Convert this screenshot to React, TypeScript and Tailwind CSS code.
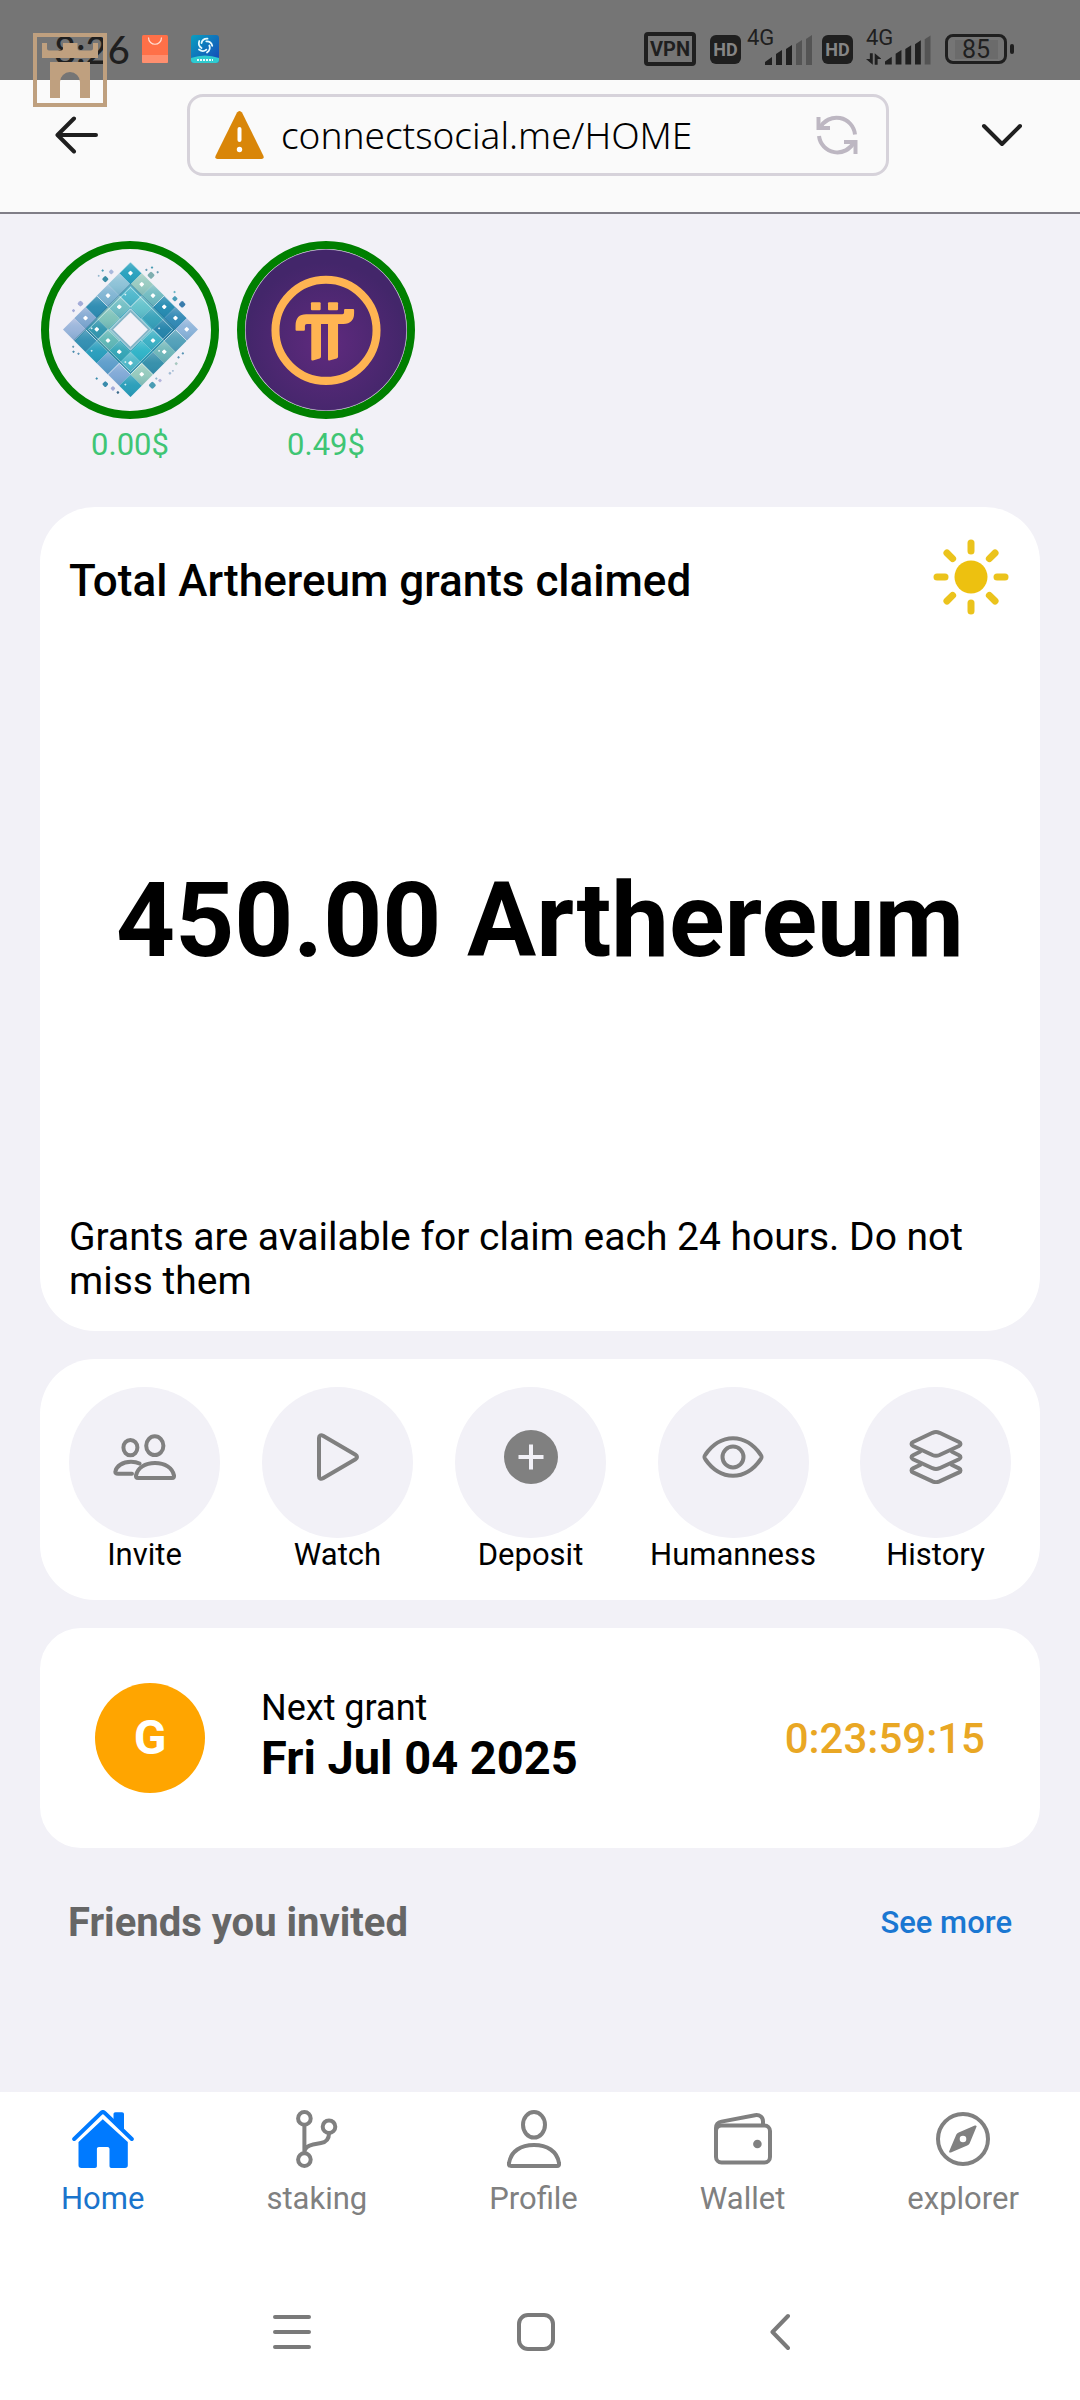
import type { ReactNode } from "react";

type IconProps = { w: number; h: number; sw?: number; children: ReactNode };

function LineIcon({ w, h, sw = 4, children }: IconProps) {
  return (
    <svg
      width={w}
      height={h}
      viewBox={`0 0 ${w} ${h}`}
      fill="none"
      stroke="currentColor"
      strokeWidth={sw}
      strokeLinecap="round"
      strokeLinejoin="round"
      aria-hidden="true"
    >
      {children}
    </svg>
  );
}

const InviteIcon = () => (
  <LineIcon w={64} h={48}>
    <ellipse cx="17.4" cy="14.6" rx="7" ry="7.7" />
    <ellipse cx="41.8" cy="12.7" rx="8.6" ry="9.4" />
    <path d="M25 45h34c1.8 0 2.2-1 2-2.5C59.5 35 52 30 42 30S24.5 35 23 42.5C22.8 44 23.2 45 25 45z" />
    <path d="M26.5 30.6C24 29.3 21 28.8 18 28.8 9 28.8 3.5 33.5 2.5 38 2 40 3 40.8 5 40.8h14" />
  </LineIcon>
);

const WatchIcon = () => (
  <LineIcon w={42} h={48}>
    <path d="M2 5v38c0 2.5 1.8 3.5 4 2.3l32.5-19c2-1.2 2-3.4 0-4.6L6 2.7C3.8 1.5 2 2.5 2 5z" />
  </LineIcon>
);

const DepositIcon = () => (
  <LineIcon w={54} h={54}>
    <circle cx="27" cy="27" r="27" fill="currentColor" stroke="none" />
    <path d="M14.5 27h25M27 14.5v25" stroke="#f2f1f7" strokeLinecap="butt" />
  </LineIcon>
);

const EyeIcon = () => (
  <LineIcon w={62} h={42}>
    <path d="M3.5 18.5C10 9 20 2.2 31 2.2S52 9 58.5 18.5c1.6 2 1.6 3 0 5C52 33 42 39.8 31 39.8S10 33 3.5 23.5c-1.6-2-1.6-3 0-5z" />
    <circle cx="31" cy="21" r="10.5" />
  </LineIcon>
);

const LayersIcon = () => (
  <LineIcon w={54} h={54}>
    <path d="M23.5 2.8L4 12c-2 1-2 3 0 4l19.5 9c2.3 1 4.7 1 7 0L50 16c2-1 2-3 0-4L30.5 2.8c-2.3-1-4.7-1-7 0z" />
    <path d="M11 21.8l-7 3.4c-2 1-2 3 0 4l19.5 9c2.3 1 4.7 1 7 0l19.5-9c2-1 2-3 0-4l-7-3.4" />
    <path d="M11 35l-7 3.4c-2 1-2 3 0 4l19.5 9c2.3 1 4.7 1 7 0l19.5-9c2-1 2-3 0-4L43 35" />
  </LineIcon>
);

const HomeIcon = () => (
  <LineIcon w={62} h={58}>
    <path
      d="M30.8 9.3L55.8 32v23.2c0 1.8-1 2.8-2.8 2.8H39.5c-1.3 0-2-.7-2-2V39c0-1.2-.8-2-2-2h-8.6c-1.2 0-2 .8-2 2v17c0 1.3-.7 2-2 2H9.3c-1.8 0-2.800-1-2.800-2.800V32zM43.500 2.300h6.500c1.300 0 2 .7 2 2V20L41.500 10.200V4.300c0-1.300.7-2 2-2z"
      fill="currentColor"
      stroke="none"
    />
    <path d="M2.200 29L28.900 3.100c1.300-1.300 2.700-1.300 4 0L59.800 29" />
  </LineIcon>
);

const BranchIcon = () => (
  <LineIcon w={42} h={58}>
    <circle cx="8.4" cy="8.4" r="6.3" />
    <circle cx="8.4" cy="49.6" r="6.3" />
    <circle cx="33" cy="16.7" r="6.3" />
    <path d="M8.4 15v28M33 23.500c0 5.500-2.500 8.500-8 9.500l-8 1.500c-5 1-8.600 3-8.600 8" />
  </LineIcon>
);

const PersonIcon = () => (
  <LineIcon w={54} h={58}>
    <ellipse cx="27" cy="14.8" rx="11" ry="12.8" />
    <path d="M4 56h46c1.6 0 2.4-1 2-3C50 41 40 35 27 35S4 41 2 53c-.4 2 .4 3 2 3z" />
  </LineIcon>
);

const WalletIcon = () => (
  <LineIcon w={58} h={52}>
    <rect x="2" y="12.5" width="54" height="37" rx="5.5" />
    <path d="M2 18v-3c0-4 2-5.8 5.5-6.4L41 2.200c5-.7 8 2 8 6.300v3.500" />
    <circle cx="43.4" cy="31" r="4.3" fill="currentColor" stroke="none" />
  </LineIcon>
);

const CompassIcon = () => (
  <LineIcon w={54} h={54}>
    <circle cx="27" cy="27" r="25" />
    <path
      fillRule="evenodd"
      stroke="none"
      fill="currentColor"
      d="M38.800 13.600c1.400-.6 2.200.2 1.600 1.500l-6.600 15.800c-.4 1-1.300 2-2.600 2.600L14.900 40.400c-1.400.6-2.200-.2-1.600-1.500l6.700-15.600c.6-1.400 1.500-2.200 2.700-2.800zM27 23.700a3.300 3.300 0 100 6.600 3.300 3.300 0 000-6.600z"
    />
  </LineIcon>
);

const CastleLogo = () => (
  <svg width="74" height="74" viewBox="33 33 74 74" aria-hidden="true">
    <rect x="35" y="35" width="70" height="70" fill="none" stroke="#bfa07f" strokeWidth="4" />
    <path
      fill="#bfa07f"
      d="M42 43h5v5.500q0 2 2 2h12q2 0 2-2V43h14.500v5.500q0 2 2 2H91q2 0 2-2V43h5v15H42zM50 62h40v36H80V82a10 10 0 00-20 0v16H50z"
    />
  </svg>
);

const bars = [
  "M0 30v-3l7-5v8z",
  "M11 30V19l6-4v15z",
  "M21 30V14l6-4v20z",
  "M31 30V9l6-4v25z",
  "M41 30V4l6-4v30z",
];

function Signal({ lit, data }: { lit: number; data?: boolean }) {
  return (
    <span className="relative flex h-9 w-[65px] items-end justify-end">
      <span className="absolute top-0 left-0 text-[22px] leading-[18px]">4G</span>
      {data && (
        <svg width="16" height="12" viewBox="0 0 16 12" className="mr-1" aria-hidden="true">
          <path d="M7 0v12L0 6h4V0zM9 12V0l7 6h-4v6z" fill="currentColor" />
        </svg>
      )}
      <svg width="47" height="30" viewBox="0 0 47 30" aria-hidden="true">
        {bars.map((d, i) => (
          <path key={d} d={d} fill={i < lit ? "#1f1f1f" : "#545454"} />
        ))}
      </svg>
    </span>
  );
}

const Hd = () => (
  <span className="flex h-[29px] w-[31px] items-center justify-center rounded-md bg-[#1f1f1f] text-[18px] font-bold text-[#858585]">
    HD
  </span>
);

function StatusBar() {
  return (
    <header className="relative flex h-20 items-center justify-between bg-[#757575] pr-[66px] pl-[54px] text-[#1f1f1f]">
      <div className="flex items-center pt-[18px]">
        <span className="w-[88px] font-[Lato] text-[38px] leading-[30px] font-medium">8:26</span>
        <svg width="26" height="28" viewBox="0 0 26 28" aria-hidden="true">
          <rect width="26" height="28" rx="1.5" fill="#ff7048" />
          <path d="M0 20h26v6.500q0 1.500-1.500 1.500h-23Q0 28 0 26.500z" fill="#ff8f6f" />
          <path d="M6.500 2.500c0 9 13 9 13 0" fill="none" stroke="#ffe0d5" strokeWidth="1.2" />
        </svg>
        <svg width="28" height="28" viewBox="0 0 28 28" className="ml-[23px]" aria-hidden="true">
          <defs>
            <linearGradient id="appBlue" x1="0" y1="0" x2="1" y2="1">
              <stop offset="0" stopColor="#0a9fc0" />
              <stop offset="1" stopColor="#1546b8" />
            </linearGradient>
          </defs>
          <rect width="28" height="28" rx="3" fill="url(#appBlue)" />
          <path d="M0 23q14-5 28 0v2q0 3-3 3H3q-3 0-3-3z" fill="#2fcbd0" />
          <g fill="none" stroke="#e8fbff" strokeWidth="1.8" strokeLinecap="round">
            {[0, 72, 144, 216, 288].map((a) => (
              <path key={a} d="M10.500 8q1-4.500 6-4.300" transform={`rotate(${a} 14 10.500)`} />
            ))}
          </g>
          <path d="M6 25h16" stroke="#e8fbff" strokeWidth="2" strokeDasharray="2 1" />
        </svg>
      </div>
      <div className="flex items-center pt-[18px]">
        <span className="flex h-[34px] w-[52px] items-center justify-center rounded-sm border-4 border-[#1f1f1f] text-[20px] font-bold">
          VPN
        </span>
        <span className="ml-[14px]">
          <Hd />
        </span>
        <span className="ml-1.5 pb-1">
          <Signal lit={3} />
        </span>
        <span className="ml-[10px]">
          <Hd />
        </span>
        <span className="ml-[13px] pb-1">
          <Signal lit={4} data />
        </span>
        <span className="ml-[14px] flex items-center gap-[3px]">
          <span className="flex h-[30px] w-[62px] items-center justify-center rounded-lg border-[3px] border-[#1f1f1f] text-[25px] leading-none">
            <span className="flex h-[19px] w-[43px] items-center justify-center bg-[#6b6b6b]">85</span>
          </span>
          <span className="h-[10px] w-1 rounded-full bg-[#1f1f1f]" />
        </span>
      </div>
      <div className="absolute top-[33px] left-[33px] z-10">
        <CastleLogo />
      </div>
    </header>
  );
}

function AddressBar() {
  return (
    <div className="flex items-start justify-between border-b-2 border-[#807e87] bg-[#fafafa] pt-[14px] pr-[57px] pb-9 pl-[55px] text-[#1f1f1f]">
      <button aria-label="Back" className="flex h-[82px] items-center">
        <LineIcon w={43} h={38}>
          <path d="M41 19H3M19 2.500L2.500 19 19 35.500" />
        </LineIcon>
      </button>
      <div className="mr-[92px] ml-[89px] flex h-[82px] min-w-0 flex-1 items-center rounded-2xl border-[3px] border-[#d6d2da] pr-7 pl-[25px]">
        <svg width="49" height="48" viewBox="0 0 49 48" className="shrink-0" aria-hidden="true">
          <path d="M22 1.500q2.500-3 5 0L48.500 45q.8 3-2 3h-44q-2.800 0-2-3z" fill="#d98609" />
          <path d="M24.500 18v11" stroke="#fff" strokeWidth="4" strokeLinecap="round" />
          <circle cx="24.5" cy="38.5" r="2.7" fill="#fff" />
        </svg>
        <input
          aria-label="Address"
          defaultValue="connectsocial.me/HOME"
          className="ml-[17px] min-w-0 flex-1 bg-transparent font-['Noto_Sans'] text-[37px] font-light text-black outline-none"
        />
        <button aria-label="Reload" className="text-[#bdb7c2]">
          <LineIcon w={42} h={42}>
            <g strokeLinecap="butt" strokeLinejoin="miter">
              <path d="M4 14a18.500 18.500 0 0135 6.500M38 28a18.500 18.500 0 01-35-6" />
              <path d="M2.500 3v11H14M39.500 40V28H28" />
            </g>
          </LineIcon>
        </button>
      </div>
      <button aria-label="Menu" className="flex h-[82px] items-center">
        <LineIcon w={42} h={24}>
          <path d="M3 3l18 18L39 3" />
        </LineIcon>
      </button>
    </div>
  );
}

const tileColors = [
  ["#2fa0bd", "#a9cdc0", "#7fbcc0", "#2b88b0", "#3a86b4", "#9db4dc"],
  ["#9cc3d8", "#58b8cc", "#6fc4cc", "#3fa0b8", "#2a7fa8", "#5d9fb8"],
  ["#8fb5d4", "#7fc0c4", "#2f9db8", "#2aa4bc", "#43b0c4", "#7db8b8"],
  ["#3488b0", "#8cc4b8", "#4aa9b4", "#2f9cb8", "#36b4c8", "#3c8ca8"],
  ["#93a9d4", "#3a94ac", "#6cb8b4", "#3ba4b4", "#58b8c8", "#a4ccbc"],
  ["#a9b4dc", "#3a8cb0", "#2f9cbc", "#6a9ccc", "#8fa8d8", "#2f9cb8"],
];

const specks: [number, number, number, string][] = [
  [257, 178, 15, "#3a8ca4"], [275, 156, 12, "#a9b8dc"], [249, 152, 6, "#4a9cb4"], [237, 168, 5, "#8fb4cc"],
  [395, 166, 17, "#7faeb0"], [398, 143, 6, "#4a9cb4"], [415, 157, 6, "#6a9cb4"], [381, 150, 6, "#6a9cb4"],
  [467, 237, 13, "#4a9cb8"], [489, 254, 16, "#3a7cac"], [466, 217, 6, "#6ab4c4"],
  [182, 252, 14, "#a4acd8"], [161, 273, 8, "#a4acd8"],
  [160, 382, 6, "#6a9cb4"], [176, 403, 6, "#5a94b4"], [161, 397, 6, "#4a8cac"],
  [257, 495, 14, "#3a8cac"], [280, 508, 11, "#a4acd8"], [295, 520, 7, "#3c6c8c"], [231, 478, 6, "#3a8cac"],
  [399, 498, 17, "#4a9cb4"], [422, 484, 9, "#b4b4dc"], [411, 478, 6, "#8fb4cc"], [452, 462, 7, "#a4bcd4"],
  [471, 433, 8, "#a9c8c0"], [478, 414, 6, "#5a94b4"], [491, 402, 6, "#5a94b4"], [461, 455, 5, "#a4bcd4"],
];

function ArthereumLogo() {
  const u = 48;
  return (
    <svg className="size-full" viewBox="87 87 489 489" aria-hidden="true">
      <defs>
        <linearGradient id="sheen" x1="0" y1="0" x2="1" y2="1">
          <stop offset="0" stopColor="#fff" stopOpacity=".25" />
          <stop offset=".5" stopColor="#1fc0d0" stopOpacity=".1" />
          <stop offset="1" stopColor="#0d6f96" stopOpacity=".25" />
        </linearGradient>
      </defs>
      <g transform="translate(333 330) rotate(45)">
        {tileColors.flatMap((row, r) =>
          row.map((c, k) => {
            const x = (k - 3) * u;
            const y = (r - 3) * u;
            const line = (r + k) % 3 === 0;
            return (
              <g key={`${r}-${k}`}>
                <rect x={x} y={y} width={u} height={u} fill={c} />
                <rect x={x} y={y} width={u} height={u} fill="url(#sheen)" />
                {line && <path d={`M${x} ${y + u}V${y}h${u}`} fill="none" stroke="#fff" strokeOpacity=".8" strokeWidth="2" />}
                {(r + 2 * k) % 2 === 0 && <rect x={x + 18} y={y + 18} width="11" height="11" rx="2" fill="#fff" />}
                {(r * k) % 3 === 1 && <rect x={x + 8} y={y + 30} width="5" height="5" fill="#fff" fillOpacity=".8" />}
              </g>
            );
          }),
        )}
        <path d="M-96 144V-96H96" fill="none" stroke="#1b6c90" strokeOpacity=".45" strokeWidth="5" />
        <path d="M-92 92H92V-92" fill="none" stroke="#1b6c90" strokeOpacity=".5" strokeWidth="5" />
        <rect x="-90" y="-90" width="180" height="180" fill="none" stroke="#fff" strokeOpacity=".7" strokeWidth="2" />
        <rect x="-44" y="-44" width="88" height="88" fill="#83b4c6" stroke="#fff" strokeWidth="2" />
        <rect x="-37" y="-37" width="74" height="74" fill="#f2f1f7" />
      </g>
      {specks.map(([x, y, s, c]) => (
        <rect key={`${x}-${y}`} x={x - s / 2} y={y - s / 2} width={s} height={s} rx={s / 4} fill={c} transform={`rotate(45 ${x} ${y})`} />
      ))}
    </svg>
  );
}

function PiLogo() {
  return (
    <svg className="size-full" viewBox="676 87 484 484" aria-hidden="true">
      <defs>
        <radialGradient id="piBg" cx=".5" cy=".58" r=".5">
          <stop offset="0" stopColor="#5f2a7e" />
          <stop offset="1" stopColor="#43266a" />
        </radialGradient>
      </defs>
      <circle cx="918" cy="329" r="241" fill="url(#piBg)" stroke="#b9a9c8" strokeWidth="2" />
      <circle cx="918" cy="330" r="151" fill="none" stroke="#ffb452" strokeWidth="24" />
      <g fill="#ffb452">
        <rect x="873" y="246" width="29" height="24" rx="3" />
        <rect x="924" y="246" width="30" height="24" rx="3" />
        <path d="M830 331q-3 0-3-3v-12q0-34 32-34h108q5 0 5-5v-8q0-3 3-3h24q3 0 3 3v9q0 32-32 33h-16v98q0 4-4 5l-22 6q-4 1-4-3V311h-21v98q0 4-4 5l-20 6q-5 1-5-3V311h-13q-6 0-6 6v11q0 3-3 3z" />
      </g>
    </svg>
  );
}

function Token({ price, name, children }: { price: string; name: string; children: ReactNode }) {
  return (
    <button aria-label={name} className="flex flex-col items-center gap-2">
      <span className="size-[178px] overflow-hidden rounded-full border-8 border-[#007f00]">{children}</span>
      <span className="text-[31px] leading-[36px] text-[#3fc574]">{price}</span>
    </button>
  );
}

const SunIcon = () => (
  <svg width="76" height="76" viewBox="-38 -38 76 76" aria-hidden="true">
    <circle r="16.5" fill="#edc110" />
    {[0, 45, 90, 135, 180, 225, 270, 315].map((a) => (
      <path key={a} d="M0-26v-8" stroke="#ebc31c" strokeWidth="7" strokeLinecap="round" transform={`rotate(${a})`} />
    ))}
  </svg>
);

const actions = [
  { label: "Invite", icon: <InviteIcon /> },
  { label: "Watch", icon: <WatchIcon /> },
  { label: "Deposit", icon: <DepositIcon /> },
  { label: "Humanness", icon: <EyeIcon />, wide: true },
  { label: "History", icon: <LayersIcon /> },
];

const tabs = [
  { label: "Home", icon: <HomeIcon />, active: true },
  { label: "staking", icon: <BranchIcon /> },
  { label: "Profile", icon: <PersonIcon /> },
  { label: "Wallet", icon: <WalletIcon /> },
  { label: "explorer", icon: <CompassIcon /> },
];

export default function App() {
  return (
    <div className="flex min-h-screen flex-col bg-[#f2f1f7] font-[Roboto,sans-serif] text-black">
      <StatusBar />
      <AddressBar />

      <main className="flex flex-1 flex-col gap-7 px-10 pt-[27px]">
        <div className="mb-4 flex gap-[18px] pl-px">
          <Token price="0.00$" name="Arthereum 0.00$">
            <ArthereumLogo />
          </Token>
          <Token price="0.49$" name="Pi 0.49$">
            <PiLogo />
          </Token>
        </div>

        <section className="flex h-[824px] flex-col justify-between rounded-[55px] bg-white px-[29px] pt-8 pb-7">
          <div className="flex items-center justify-between">
            <h1 className="pt-2 text-[44px] leading-[50px] font-medium">Total Arthereum grants claimed</h1>
            <button aria-label="Toggle theme" className="pr-0.5">
              <SunIcon />
            </button>
          </div>
          <p className="pt-3 text-center text-[103px] leading-[120px] font-bold">450.00 Arthereum</p>
          <p className="text-[39px] leading-[44px]">Grants are available for claim each 24 hours. Do not miss them</p>
        </section>

        <section className="flex justify-between rounded-[55px] bg-white px-[29px] py-7">
          {actions.map((a) => (
            <button key={a.label} className={a.wide ? "flex w-[170px] flex-col items-center" : "flex flex-col items-center"}>
              <span className="flex size-[151px] items-center justify-center rounded-full bg-[#f2f1f7] pb-[11px] text-[#808080]">
                {a.icon}
              </span>
              <span className="text-[31px] leading-[34px]">{a.label}</span>
            </button>
          ))}
        </section>

        <section className="flex items-center rounded-[41px] bg-white p-[55px]">
          <span className="flex size-[110px] items-center justify-center rounded-full bg-[#ffa500] text-[48px] font-bold text-white">
            G
          </span>
          <div className="ml-14">
            <p className="text-[36px] leading-[40px]">Next grant</p>
            <p className="text-[47px] leading-[60px] font-bold">Fri Jul 04 2025</p>
          </div>
          <time className="ml-auto text-[42px] font-medium text-[#e9a724]">0:23:59:15</time>
        </section>

        <section className="flex items-center justify-between px-7 pt-6">
          <h2 className="text-[40px] leading-[46px] font-bold text-[#666666]">Friends you invited</h2>
          <a href="#friends" className="text-[31px] leading-[36px] font-medium text-[#1a77d2]">
            See more
          </a>
        </section>
      </main>

      <nav aria-label="Main" className="flex justify-around bg-white pt-2 pb-24">
        {tabs.map((t) => (
          <a
            key={t.label}
            href={`#${t.label}`}
            className={t.active ? "flex flex-col items-center text-[#007aff]" : "flex flex-col items-center text-[#808080]"}
          >
            <span className="flex h-[78px] items-center">{t.icon}</span>
            <span className={t.active ? "pt-1 text-[31px] leading-[34px] text-[#1a74cc]" : "pt-1 text-[31px] leading-[34px]"}>{t.label}</span>
          </a>
        ))}
      </nav>

      <div className="flex justify-center gap-[206px] bg-white pr-2 pb-12 text-[#7a7a7a]">
        <button aria-label="Recent apps" className="flex h-10 items-center">
          <LineIcon w={38} h={38}>
            <path d="M2 4h34M2 19h34M2 34h34" />
          </LineIcon>
        </button>
        <button aria-label="Home screen" className="flex h-10 items-center">
          <LineIcon w={38} h={38}>
            <rect x="2" y="2" width="34" height="34" rx="9" />
          </LineIcon>
        </button>
        <button aria-label="Go back" className="flex h-10 w-[38px] items-center justify-center">
          <LineIcon w={20} h={38}>
            <path d="M18 3L2.500 19 18 35" />
          </LineIcon>
        </button>
      </div>
    </div>
  );
}
